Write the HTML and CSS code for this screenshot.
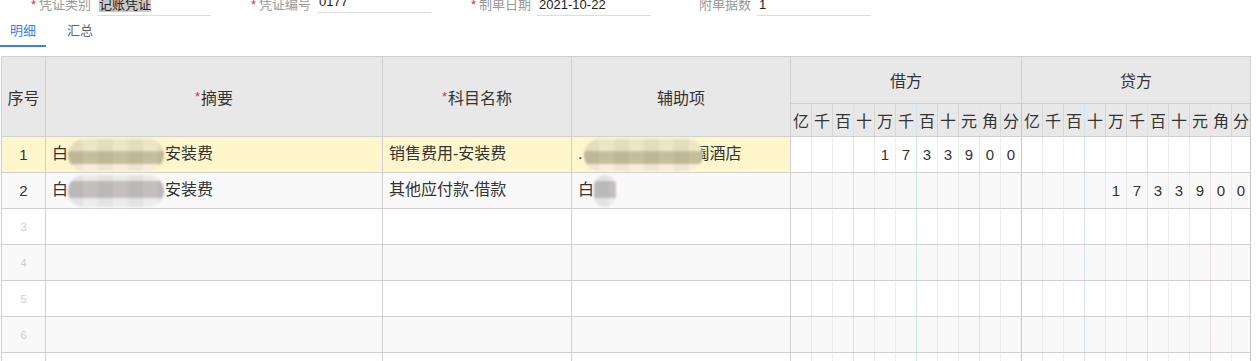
FILE: index.html
```html
<!DOCTYPE html>
<html lang="zh-CN">

<head>
    <meta charset="UTF-8">
    <meta name="viewport" content="width=device-width, initial-scale=1.0">
    <title>记账凭证</title>
    <link rel="stylesheet" href="styles.css">
</head>

<body>
    <!-- En-tête du bon -->
    <div class="form-row">
        <div class="field">
            <label class="field-label required">凭证类别</label>
            <div class="field-input"><span class="selected">记账凭证</span></div>
        </div>
        <div class="field">
            <label class="field-label required">凭证编号</label>
            <div class="field-input raised">0177</div>
        </div>
        <div class="field">
            <label class="field-label required">制单日期</label>
            <div class="field-input">2021-10-22</div>
        </div>
        <div class="field">
            <label class="field-label">附单据数</label>
            <div class="field-input">1</div>
        </div>
    </div>

    <!-- Onglets -->
    <div class="tabs">
        <div class="tab active">明细</div>
        <div class="tab">汇总</div>
    </div>

    <!-- Tableau des écritures -->
    <table class="voucher">
        <colgroup>
            <col class="col-no">
            <col class="col-summary">
            <col class="col-account">
            <col class="col-aux">
            <col span="21" class="col-digit">
            <col class="col-digit-last">
        </colgroup>
        <thead>
            <tr class="head-top">
                <th rowspan="2">序号</th>
                <th rowspan="2"><span class="star">*</span>摘要</th>
                <th rowspan="2"><span class="star">*</span>科目名称</th>
                <th rowspan="2">辅助项</th>
                <th colspan="11" class="side">借方</th>
                <th colspan="11" class="side">贷方</th>
            </tr>
            <tr class="head-units" id="unitRow"></tr>
        </thead>
        <tbody id="voucherBody">
            <tr class="current" data-debit="1733900">
                <td class="no">1</td>
                <td class="text">白<span class="mask warm wide"></span>安装费</td>
                <td class="text">销售费用-安装费</td>
                <td class="text">.<span class="mask warm aux"></span>阖酒店</td>
            </tr>
            <tr class="alt" data-credit="1733900">
                <td class="no">2</td>
                <td class="text">白<span class="mask grey wide"></span>安装费</td>
                <td class="text">其他应付款-借款</td>
                <td class="text">白<span class="mask grey small"></span></td>
            </tr>
            <tr class="empty">
                <td class="no">3</td>
                <td></td>
                <td></td>
                <td></td>
            </tr>
            <tr class="empty alt">
                <td class="no">4</td>
                <td></td>
                <td></td>
                <td></td>
            </tr>
            <tr class="empty">
                <td class="no">5</td>
                <td></td>
                <td></td>
                <td></td>
            </tr>
            <tr class="empty alt">
                <td class="no">6</td>
                <td></td>
                <td></td>
                <td></td>
            </tr>
            <tr class="empty">
                <td class="no"></td>
                <td></td>
                <td></td>
                <td></td>
            </tr>
        </tbody>
    </table>

    <script>
        // Colonnes des montants : une case par chiffre
        const units = ['亿', '千', '百', '十', '万', '千', '百', '十', '元', '角', '分'];

        const unitRow = document.getElementById('unitRow');
        for (let side = 0; side < 2; side++) {
            units.forEach((u, i) => {
                const th = document.createElement('th');
                th.className = 'unit d' + i + (side === 1 ? ' credit' : '');
                th.textContent = u;
                unitRow.appendChild(th);
            });
        }

        // Remplissage des montants débit / crédit
        document.querySelectorAll('#voucherBody tr').forEach(tr => {
            const debit = (tr.dataset.debit || '').padStart(11, ' ');
            const credit = (tr.dataset.credit || '').padStart(11, ' ');
            [debit, credit].forEach((amount, side) => {
                for (let i = 0; i < 11; i++) {
                    const td = document.createElement('td');
                    td.className = 'digit d' + i + (side === 1 ? ' credit' : '');
                    td.textContent = amount[i].trim();
                    tr.appendChild(td);
                }
            });
        });
    </script>
</body>

</html>
```

FILE: styles.css
```css
/* Corps de la page */
body {
    margin: 0;
    font-family: "Liberation Sans", "Noto Sans CJK SC", sans-serif;
    color: #333;
    background-color: #fff;
    overflow: hidden;
}

/* Champs d'en-tête */
.form-row {
    display: flex;
    height: 23px;
    margin-top: -6px;
}

.field {
    display: flex;
    align-items: flex-start;
    width: 211px;
    margin-right: 9px;
}

.field-label {
    width: 92px;
    text-align: right;
    font-size: 13px;
    line-height: 21px;
    color: #999;
}

.field-label.required::before {
    content: "*";
    color: #f5222d;
    margin-right: 3px;
}

.field-input {
    width: 113px;
    height: 21px;
    margin-left: 6px;
    padding-left: 2px;
    border-bottom: 1px solid #ddd;
    font-size: 13px;
    line-height: 21px;
    color: #222;
}

.field-input.raised {
    margin-top: -3px;
}

.selected {
    background-color: #c9c9c9;
}

/* Onglets */
.tabs {
    display: flex;
    height: 30px;
}

.tab {
    padding: 0 10px;
    font-size: 13px;
    line-height: 28px;
    color: #666;
    border-bottom: 2px solid transparent;
}

.tab + .tab {
    margin-left: 11px;
}

.tab.active {
    color: #3d7ef5;
    border-bottom-color: #3d7ef5;
}

/* Tableau */
.voucher {
    margin: 9px 0 0 1px;
    width: 1249px;
    border-collapse: collapse;
    table-layout: fixed;
    font-size: 16px;
}

.col-no {
    width: 44px;
}

.col-summary {
    width: 337px;
}

.col-account {
    width: 189px;
}

.col-aux {
    width: 219px;
}

.col-digit {
    width: 21px;
}

.col-digit-last {
    width: 19px;
}

.voucher th,
.voucher td {
    border: 1px solid #d0d0d0;
    padding: 0;
}

.voucher th {
    background-color: #e8e8e8;
    font-weight: normal;
    color: #333;
}

.head-top {
    height: 47px;
}

.head-units {
    height: 33px;
}

.star {
    color: #f5222d;
    font-size: 13px;
    vertical-align: 3px;
    margin-right: 1px;
}

.voucher tbody tr {
    height: 36px;
}

.voucher tbody td {
    line-height: 20px;
}

.voucher td.no {
    text-align: center;
    font-size: 15px;
}

.voucher td.text {
    padding: 0 0 1px 6px;
    white-space: nowrap;
}

.empty td.no {
    color: #ccc;
    font-size: 11px;
}

/* Cases des chiffres */
.voucher .digit {
    text-align: center;
    font-size: 15px;
    border-left-color: #ececec;
    border-right-color: #ececec;
}

.voucher .unit {
    border-left-color: #d6d6d6;
    border-right-color: #d6d6d6;
}

.voucher .d2,
.voucher .d5 {
    border-right-color: #cde5f4;
}

.voucher .d3,
.voucher .d6 {
    border-left-color: #cde5f4;
}

.voucher .d8 {
    border-right-color: #eedfe3;
}

.voucher .d9 {
    border-left-color: #eedfe3;
}

.voucher .d0 {
    border-left-color: #c8c8c8;
}

.voucher .d10 {
    border-right-color: #c8c8c8;
}

/* Couleurs des lignes */
.current td {
    background-color: #fff6cc;
}

.current td.digit {
    background-color: #fff;
}

.alt td {
    background-color: #f9f9f9;
}

/* Zones masquées */
.mask {
    position: relative;
    display: inline-block;
    vertical-align: middle;
    height: 32px;
    margin-top: -8px;
    margin-bottom: -8px;
    border-radius: 16px;
    filter: blur(1px);
}

.mask.warm {
    background:
        linear-gradient(to right, rgba(0, 0, 0, 0.04) 50%, transparent 50%) 0 0 / 30px 100%,
        linear-gradient(to bottom, #ece5c6 0 38%, #c6bf9e 38% 78%, #f5efd9 78%);
}

.mask.grey {
    background:
        linear-gradient(to right, rgba(0, 0, 0, 0.04) 50%, transparent 50%) 0 0 / 30px 100%,
        linear-gradient(to bottom, #ebe9e9 0 20%, #c3bfbf 20% 72%, #ececec 72%);
}

.mask.wide {
    width: 96px;
    margin-right: 1px;
}

.mask.aux {
    width: 119px;
    margin-left: 2px;
    margin-right: -10px;
}

.mask.small {
    width: 22px;
}
```
